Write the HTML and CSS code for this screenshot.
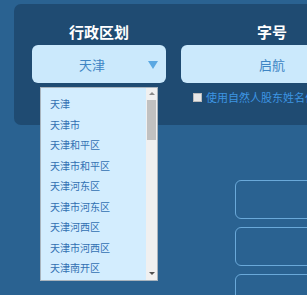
FILE: index.html
```html
<!DOCTYPE html>
<html lang="zh-CN">
<head>
  <meta charset="UTF-8">
  <meta name="viewport" content="width=device-width, initial-scale=1.0">
  <title>企业名称申报</title>
  <link rel="stylesheet" href="styles.css">
</head>
<body>
  <div class="panel">
    <div class="field field-region">
      <div class="label">行政区划</div>
      <div class="select">
        <span>天津</span>
        <span class="arrow"></span>
      </div>
      <div class="dropdown">
        <ul class="options">
          <li>天津</li>
          <li>天津市</li>
          <li>天津和平区</li>
          <li>天津市和平区</li>
          <li>天津河东区</li>
          <li>天津市河东区</li>
          <li>天津河西区</li>
          <li>天津市河西区</li>
          <li>天津南开区</li>
        </ul>
        <div class="scrollbar">
          <span class="up"></span>
          <span class="thumb"></span>
          <span class="down"></span>
        </div>
      </div>
    </div>
    <div class="field field-name">
      <div class="label">字号</div>
      <div class="input">启航</div>
      <label class="check"><span class="box"></span>使用自然人股东姓名作为字号</label>
    </div>
  </div>

  <div class="cards">
    <div class="card"></div>
    <div class="card"></div>
    <div class="card"></div>
  </div>
</body>
</html>
```

FILE: styles.css
```css
body {
  margin: 0;
  background: #2a6291;
  font-family: "Noto Sans CJK SC", "Noto Sans", sans-serif;
  overflow: hidden;
  height: 295px;
}
.panel {
  margin: 4px 0 0 14px;
  width: 420px;
  height: 121px;
  background: #1f4b72;
  border-radius: 7px;
  display: flex;
  gap: 15px;
  padding-left: 18px;
  box-sizing: border-box;
}
.field {
  position: relative;
  display: flex;
  flex-direction: column;
}
.field-region {
  width: 134px;
}
.field-name {
  width: 182px;
}
.label {
  color: #fff;
  font-weight: bold;
  font-size: 15px;
  line-height: 20px;
  text-align: center;
  margin-top: 18px;
  height: 23px;
}
.select,
.input {
  height: 38px;
  background: #cbe9fc;
  border-radius: 6px;
  color: #3e85c4;
  font-size: 13px;
  display: flex;
  align-items: center;
  justify-content: center;
  position: relative;
}
.select span:first-child {
  margin-left: -14px;
}
.arrow {
  position: absolute;
  right: 8px;
  top: 16px;
  width: 0;
  height: 0;
  border-left: 5px solid transparent;
  border-right: 5px solid transparent;
  border-top: 8px solid #5aa8e2;
}
.check {
  display: flex;
  align-items: center;
  white-space: nowrap;
  margin: 7px 0 0 12px;
  color: #3d95e2;
  font-size: 11px;
  line-height: 14px;
}
.check .box {
  width: 7px;
  height: 7px;
  background: #e8e8e8;
  border: 1px solid #bbb;
  margin-right: 4px;
}
.dropdown {
  position: absolute;
  left: 8px;
  top: 83px;
  width: 118px;
  height: 194px;
  background: #d3edfe;
  border: 1px solid #a9b4bd;
  box-sizing: border-box;
  display: flex;
}
.options {
  list-style: none;
  margin: 0;
  padding: 6px 0 0 9px;
  flex: 1;
  font-size: 10px;
  color: #3270b2;
}
.options li {
  height: 20.5px;
  line-height: 20px;
}
.scrollbar {
  width: 11px;
  background: #f0f0f0;
  position: relative;
}
.scrollbar .up,
.scrollbar .down {
  position: absolute;
  left: 3px;
  width: 0;
  height: 0;
  border-left: 3px solid transparent;
  border-right: 3px solid transparent;
}
.scrollbar .up {
  top: 4px;
  border-bottom: 3px solid #8a8a8a;
}
.scrollbar .down {
  bottom: 5px;
  border-top: 3px solid #505050;
}
.scrollbar .thumb {
  position: absolute;
  left: 1px;
  right: 1px;
  top: 12px;
  height: 40px;
  background: #c1c1c1;
}
.cards {
  margin: 55px 0 0 235px;
  display: flex;
  flex-direction: column;
  gap: 8px;
}
.card {
  width: 120px;
  height: 37px;
  border: 1.5px solid #6aa9d9;
  border-radius: 6px;
}
```
